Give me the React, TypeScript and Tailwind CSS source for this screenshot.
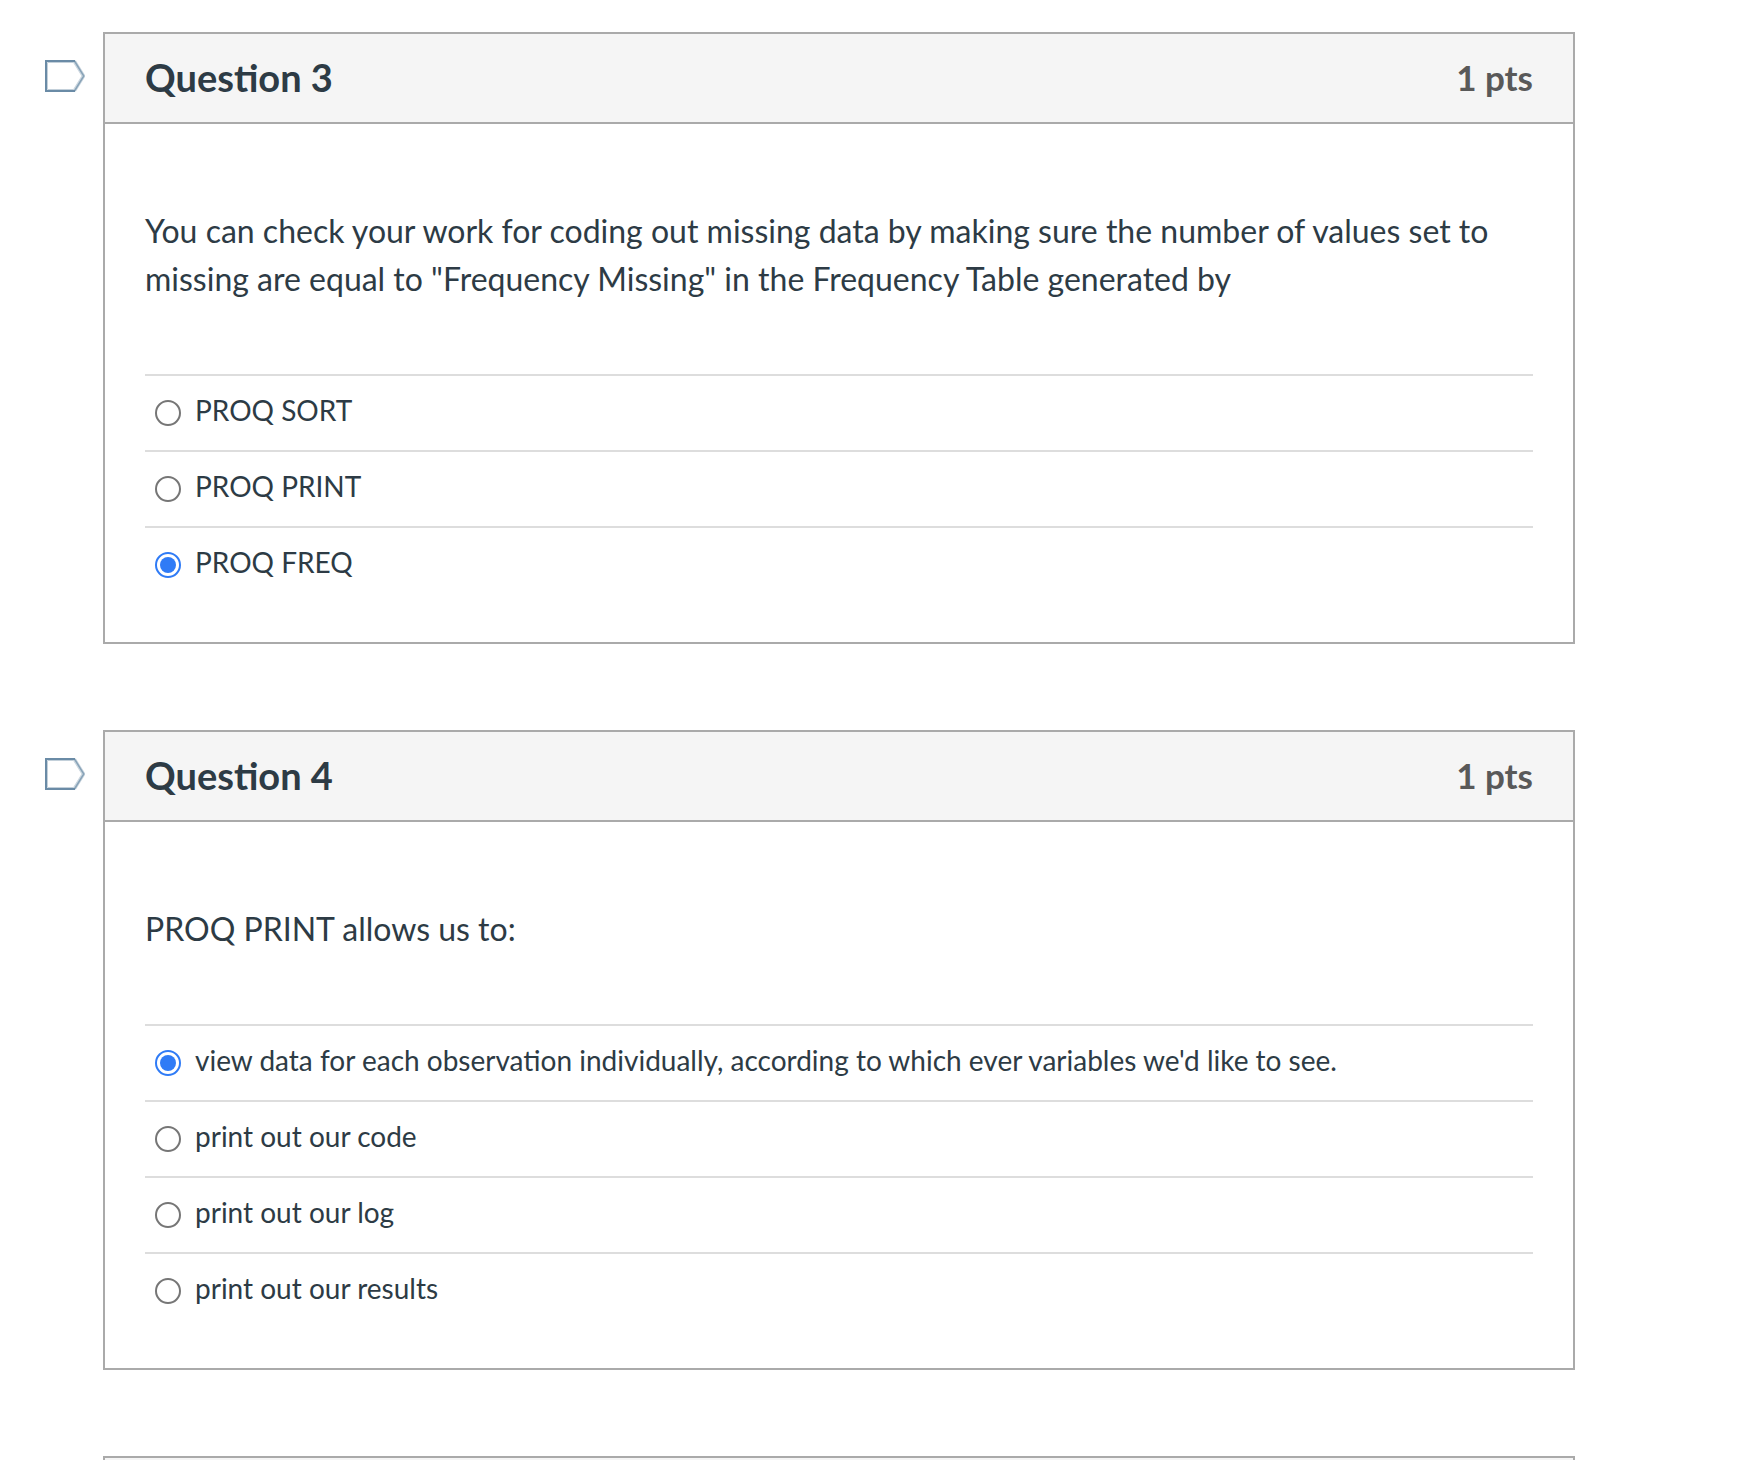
import { useState } from "react";

type Question = {
    id: number;
    title: string;
    points: string;
    text: string;
    answers: string[];
    selected: number;
};

const questions: Question[] = [
    {
        id: 3,
        title: "Question 3",
        points: "1 pts",
        text: 'You can check your work for coding out missing data by making sure the number of values set to missing are equal to "Frequency Missing" in the Frequency Table generated by',
        answers: ["PROQ SORT", "PROQ PRINT", "PROQ FREQ"],
        selected: 2,
    },
    {
        id: 4,
        title: "Question 4",
        points: "1 pts",
        text: "PROQ PRINT allows us to:",
        answers: [
            "view data for each observation individually, according to which ever variables we'd like to see.",
            "print out our code",
            "print out our log",
            "print out our results",
        ],
        selected: 0,
    },
];

function FlagButton({ label }: { label: string }) {
    const [flagged, setFlagged] = useState(false);

    return (
        <button
            type="button"
            aria-label={label}
            aria-pressed={flagged}
            className="mt-7 h-8 w-10 shrink-0 cursor-pointer"
            onClick={() => setFlagged(!flagged)}
        >
            <svg viewBox="0 0 40 32" className="h-8 w-10" fill="none">
                <path d="M2.5 2.5H29L37.5 16L29 29.5H2.5Z" stroke="#c3d0da" fill={flagged ? "#fcd34d" : "#fff"} />
                <path d="M29.5 1.5L38.5 16L29.5 30.5" stroke="#cdd8e0" strokeWidth="3.5" />
                <path d="M29.5 1L38.8 16L29.5 31" stroke="#88a3b8" strokeWidth="1.5" />
                <path d="M30 1H1V31H30" stroke="#6a8ba6" strokeWidth="2" />
            </svg>
        </button>
    );
}

function QuestionCard({ question }: { question: Question }) {
    const [selected, setSelected] = useState(question.selected);

    return (
        <div className="flex items-start gap-[18px]">
            <FlagButton label={`Flag ${question.title}`} />
            <section className="min-w-0 flex-1 border-2 border-[#aaaaaa]">
                <div className="flex h-[90px] items-center justify-between border-b-2 border-[#aaaaaa] bg-[#f5f5f5] px-10 pb-[2px]">
                    <h2 className="text-[38px] leading-[48px] font-bold">{question.title}</h2>
                    <span className="text-[35px] leading-[48px] font-bold text-[#595959]">{question.points}</span>
                </div>
                <div className="px-10 pt-[83px] pb-10">
                    <p id={`question-${question.id}`} className="mb-[71px] text-[32px] leading-[48px]">
                        {question.text}
                    </p>
                    <div role="radiogroup" aria-labelledby={`question-${question.id}`}>
                        {question.answers.map((answer, i) => (
                            <label
                                key={answer}
                                className="flex cursor-pointer items-start gap-[14px] border-t-2 border-[#dddddd] px-[10px] pt-[14px] pb-5"
                            >
                                <input
                                    type="radio"
                                    name={`answer-${question.id}`}
                                    checked={selected === i}
                                    onChange={() => setSelected(i)}
                                    className="mt-[10px] size-[26px] shrink-0 appearance-none rounded-full border-2 border-[#767676] bg-white bg-clip-content p-[3px] checked:border-[#2f7bf6] checked:bg-[#2f7bf6]"
                                />
                                <span className="text-[28px] leading-10">{answer}</span>
                            </label>
                        ))}
                    </div>
                </div>
            </section>
        </div>
    );
}

export default function App() {
    return (
        <main className="h-screen overflow-hidden bg-white pt-8 pr-[185px] pl-[45px] font-['Lato',sans-serif] text-[#2d3b45]">
            <div className="flex flex-col gap-[86px]">
                {questions.map((question) => (
                    <QuestionCard key={question.id} question={question} />
                ))}
                <section className="ml-[58px] h-[92px] border-2 border-[#aaaaaa] bg-[#f5f5f5]"></section>
            </div>
        </main>
    );
}
